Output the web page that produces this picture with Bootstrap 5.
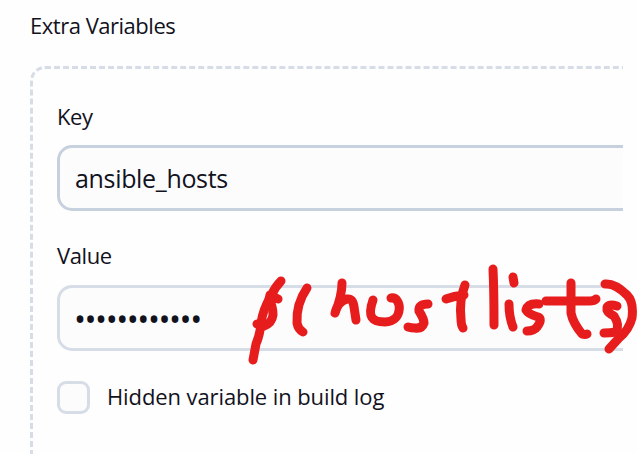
<!DOCTYPE html>
<html lang="en">
<head>
<meta charset="utf-8">
<meta name="viewport" content="width=device-width, initial-scale=1">
<title>Extra Variables</title>
<link href="https://cdn.jsdelivr.net/npm/bootstrap@5.3.0/dist/css/bootstrap.min.css" rel="stylesheet">
<style>
body{height:454px;background:#fefefe;color:#12121d;font-family:"Open Sans","Noto Sans",sans-serif}
.form-view{width:622.5px;height:454px;padding-left:30px}
.form-view label,.section-title{display:block;font-size:22px;line-height:30px;margin:0;white-space:nowrap;width:max-content;letter-spacing:-.4px}
.form-view .section-title{margin-top:10px;letter-spacing:-.48px}
.variable-panel{width:900px;height:500px;margin-top:26px;padding:32px 24px;border:3px dashed #d6dde7;border-radius:15px}
.variable-panel .form-control{height:66px;border:3px solid #c7d1de;border-radius:15px;background:#fcfcfd;color:#12121d;font-size:25px;line-height:36px;padding:12px 15px;margin-top:14px;letter-spacing:-.33px}
.variable-panel .value-field{margin-top:15px;border-color:#d6dde7;font-size:32px;letter-spacing:-1.47px;padding:12px 14px}
.variable-panel .value-label{margin-top:29px}
.variable-panel .hidden-row{margin-top:30px}
.variable-panel .hidden-label{letter-spacing:-.1px;margin:0 0 3px 17px}
.variable-panel .form-check-input{width:33px;height:33px;border:3px solid #d6dde7;border-radius:9px;background:#fcfcfd;margin:0;float:none}
.ink{pointer-events:none}
</style>
</head>
<body class="position-relative overflow-hidden">
<main class="form-view overflow-hidden d-flex flex-column align-items-start">
  <h1 class="section-title fw-normal flex-shrink-0">Extra Variables</h1>
  <section class="variable-panel flex-shrink-0">
    <label for="key" class="key-label">Key</label>
    <input id="key" class="form-control" type="text" value="ansible_hosts">
    <label for="value" class="value-label">Value</label>
    <input id="value" class="form-control value-field" type="text" value="••••••••••••">
    <div class="d-flex align-items-center hidden-row">
      <input id="hidden" class="form-check-input flex-shrink-0" type="checkbox">
      <label for="hidden" class="hidden-label">Hidden variable in build log</label>
    </div>
  </section>
</main>
<!-- Handwritten annotation over the value field -->
<svg class="ink position-absolute top-0 start-0" width="638" height="454" fill="none" stroke="#e71d1d" stroke-width="9" stroke-linecap="round" stroke-linejoin="round" aria-hidden="true">
  <path d="M281 281Q275 287 271 296Q263 309 261 323Q260 335 256 344L253 360"/>
  <path d="M278 299L270 295L269 299Q273 306 273 315Q272 323 264 326L257 324"/>
  <path d="M307 288Q296 304 297 323Q298 329 303 332"/>
  <path d="M342 283Q342 296 335 313Q338 301 347 299Q353 298 354 307L356 320"/>
  <path d="M373 300C367 317 372 322 385 322C404 322 402 296 391 298"/>
  <path d="M428 304Q418 304 419 311Q424 319 424 323Q422 329 415 328Q411 328 408 327"/>
  <path d="M446 299Q454 296 464 295M465 285Q459 300 461 319Q461 325 463 328"/>
  <path d="M493 269Q494 290 494 325"/>
  <path d="M513 277L514 283M509 304Q509 317 513 327"/>
  <path d="M539 304Q528 303 526 310Q528 314 538 317Q543 319 537 327Q534 331 527 331"/>
  <path d="M546 301H590Q594 301 596 299M571 283V313Q573 323 582 334Q585 335 587 334"/>
  <path d="M617 306Q606 303 607 310Q608 313 614 316Q620 325 616 332Q610 333 604 333"/>
  <path d="M605 284Q615 283 627 295Q634 302 632 318Q629 330 619 338L609 349"/>
</svg>
<script src="https://cdn.jsdelivr.net/npm/bootstrap@5.3.0/dist/js/bootstrap.bundle.min.js"></script>
</body>
</html>
